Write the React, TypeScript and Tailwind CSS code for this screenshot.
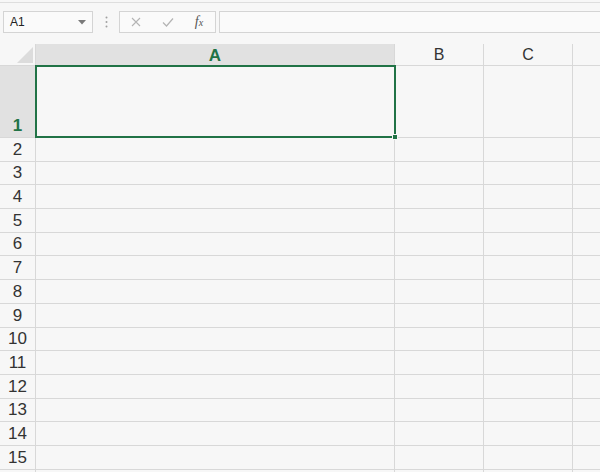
import React from "react";

const rows = [2, 3, 4, 5, 6, 7, 8, 9, 10, 11, 12, 13, 14, 15, 16];

export default function App() {
  return (
    <div
      className="w-[600px] h-[472px] overflow-hidden bg-[#f7f7f7] text-[#444]"
      style={{ fontFamily: '"Liberation Sans", Arial, sans-serif' }}
    >
      {/* top strip */}
      <div className="h-[3px] border-b border-[#dedede]" />
      {/* formula bar */}
      <div className="flex items-center h-[22px] mt-[8px]">
        <div className="ml-[3px] w-[90px] h-[22px] border border-[#d4d4d4] bg-[#fafafa] flex items-center justify-between pl-[6px] pr-[6px]">
          <span className="text-[12px] text-[#222]">A1</span>
          <svg width="8" height="5" viewBox="0 0 8 5">
            <polygon points="0,0 8,0 4,4.5" fill="#7a7a7a" />
          </svg>
        </div>
        <div className="w-[26px] flex justify-center">
          <svg width="3" height="12" viewBox="0 0 3 12">
            <circle cx="1.5" cy="1.5" r="1" fill="#a0a0a0" />
            <circle cx="1.5" cy="6" r="1" fill="#a0a0a0" />
            <circle cx="1.5" cy="10.5" r="1" fill="#a0a0a0" />
          </svg>
        </div>
        <div className="w-[97px] h-[22px] border border-[#d4d4d4] bg-[#fafafa] flex items-center">
          <div className="w-[32px] flex justify-center">
            <svg width="10" height="10" viewBox="0 0 10 10">
              <path d="M1 1 L9 9 M9 1 L1 9" stroke="#b4b4b4" strokeWidth="1.1" fill="none" />
            </svg>
          </div>
          <div className="w-[32px] flex justify-center">
            <svg width="12" height="10" viewBox="0 0 12 10">
              <path d="M1 5.5 L4.5 9 L11 1.5" stroke="#b4b4b4" strokeWidth="1.2" fill="none" />
            </svg>
          </div>
          <div className="w-[30px] flex justify-center">
            <span
              className="text-[14px] italic text-[#555] leading-none"
              style={{ fontFamily: '"Liberation Serif", "Times New Roman", serif' }}
            >
              f<span className="text-[10px]">x</span>
            </span>
          </div>
        </div>
        <div className="ml-[3px] flex-1 h-[22px] border border-[#d4d4d4] border-r-0 bg-[#fafafa]" />
      </div>
      {/* grid */}
      <div className="relative mt-[11px]">
        <div className="grid grid-cols-[36px_359px_89px_89px_1fr]">
          {/* header row */}
          <div className="h-[22px] border-r border-b border-[#d8d8d8] relative">
            <svg className="absolute right-[2px] bottom-[2px]" width="16" height="16" viewBox="0 0 16 16">
              <polygon points="16,0 16,16 0,16" fill="#dcdcdc" />
            </svg>
          </div>
          <div className="h-[22px] bg-[#e1e1e1] border-r border-b border-[#d8d8d8] flex items-end justify-center pb-[1px]">
            <span className="text-[17px] font-bold text-[#217346] leading-none">A</span>
          </div>
          <div className="h-[22px] border-r border-b border-[#d8d8d8] flex items-end justify-center pb-[2px]">
            <span className="text-[16px] leading-none text-[#333]">B</span>
          </div>
          <div className="h-[22px] border-r border-b border-[#d8d8d8] flex items-end justify-center pb-[2px]">
            <span className="text-[16px] leading-none text-[#333]">C</span>
          </div>
          <div className="h-[22px] border-b border-[#d8d8d8]" />

          {/* row 1 */}
          <div className="h-[72px] bg-[#e1e1e1] border-r border-b border-[#d8d8d8] flex items-end justify-center pb-[3px]">
            <span className="text-[17px] font-bold text-[#217346] leading-none">1</span>
          </div>
          <div className="h-[72px] border-r border-b border-[#d8d8d8]" />
          <div className="h-[72px] border-r border-b border-[#d8d8d8]" />
          <div className="h-[72px] border-r border-b border-[#d8d8d8]" />
          <div className="h-[72px] border-b border-[#d8d8d8]" />

          {rows.map((r) => (
            <React.Fragment key={r}>
              <div className="h-[23.7px] border-r border-b border-[#d8d8d8] flex items-end justify-center pb-[3px]">
                {r < 16 && <span className="text-[17px] leading-none text-[#333]">{r}</span>}
              </div>
              <div className="h-[23.7px] border-r border-b border-[#d8d8d8]" />
              <div className="h-[23.7px] border-r border-b border-[#d8d8d8]" />
              <div className="h-[23.7px] border-r border-b border-[#d8d8d8]" />
              <div className="h-[23.7px] border-b border-[#d8d8d8]" />
            </React.Fragment>
          ))}
        </div>
        {/* selection */}
        <div className="absolute left-[35px] top-[21px] w-[361px] h-[73px] border-2 border-[#217346]" />
        <div className="absolute left-[392px] top-[90px] w-[6px] h-[6px] bg-[#217346] border border-[#f7f7f7]" />
      </div>
    </div>
  );
}
